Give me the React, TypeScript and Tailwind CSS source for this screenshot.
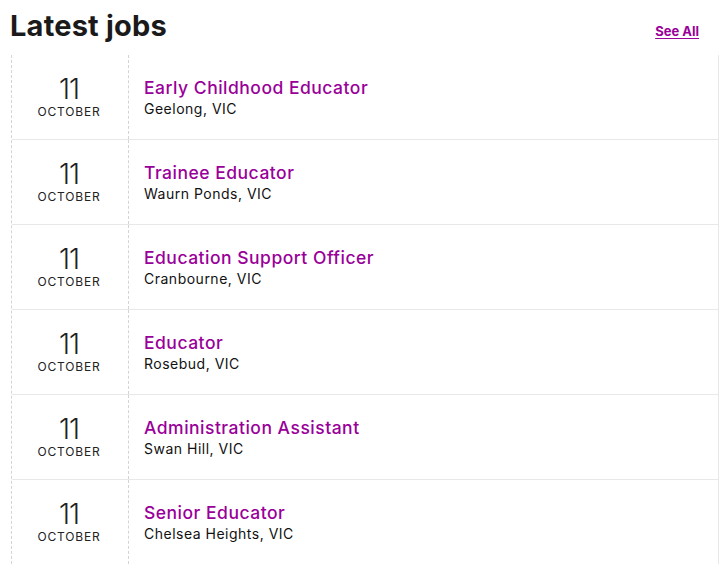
import React from "react";

const jobs = [
  { title: "Early Childhood Educator", place: "Geelong, VIC" },
  { title: "Trainee Educator", place: "Waurn Ponds, VIC" },
  { title: "Education Support Officer", place: "Cranbourne, VIC" },
  { title: "Educator", place: "Rosebud, VIC" },
  { title: "Administration Assistant", place: "Swan Hill, VIC" },
  { title: "Senior Educator", place: "Chelsea Heights, VIC" },
];

function JobRow({ title, place, first }: { title: string; place: string; first: boolean }) {
  return (
    <li className={`flex ${first ? "h-[84px]" : "h-[85px] border-t border-[#e8e8e8]"}`}>
      <div className="flex w-[117px] shrink-0 flex-col items-center justify-center border-r border-dashed border-[#d4d4d4] pr-[2px]">
        <span className="text-[28px] font-light leading-[28px] tracking-[-1px] text-[#222]">11</span>
        <span className="mt-[2px] text-[12px] leading-[14px] tracking-[0.8px] text-[#222]">OCTOBER</span>
      </div>
      <div className="flex flex-col justify-center pl-[15px] pt-[1px]">
        <a href="#" className="text-[17.5px] font-medium leading-[22px] tracking-[0.5px] text-[#990099]">
          {title}
        </a>
        <span className="text-[14px] leading-[19px] tracking-[0.5px] text-[#111]">{place}</span>
      </div>
    </li>
  );
}

export default function App() {
  return (
    <div className="h-[576px] w-[720px] bg-white pl-[10px]" style={{ fontFamily: "Inter, 'Noto Sans', sans-serif" }}>
      <header className="flex h-[55px] items-start justify-between">
        <h2 className="pt-[7px] text-[29px] font-bold leading-[38px] tracking-[0.2px] text-[#1a1a1a]">Latest jobs</h2>
        <a href="#" className="mr-[21px] mt-[22px] text-[13px] font-bold leading-[18px] text-[#990099] underline underline-offset-2">
          See All
        </a>
      </header>
      <div className="ml-[1px] mr-[1px] border-r border-[#e8e8e8]">
        <ul className="border-l border-dashed border-[#d4d4d4]">
          {jobs.map((j, i) => (
            <JobRow key={j.title} title={j.title} place={j.place} first={i === 0} />
          ))}
        </ul>
      </div>
    </div>
  );
}
